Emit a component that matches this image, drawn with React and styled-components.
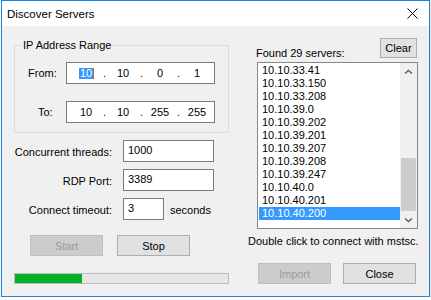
import React from "react";
import styled, { createGlobalStyle, css } from "styled-components";

const GlobalStyle = createGlobalStyle`
  html, body {
    margin: 0;
    padding: 0;
    background: #ffffff;
  }
  body {
    font-family: "Liberation Sans", Arial, sans-serif;
    font-size: 11px;
    color: #000;
  }
`;

const Window = styled.div`
  box-sizing: border-box;
  width: 429px;
  height: 297px;
  margin-left: 1px;
  border: 1px solid #1c84d9;
  background: #f0f0f0;
  display: flex;
  flex-direction: column;
  box-shadow: 1px 2px 3px rgba(0, 0, 0, 0.18);
  white-space: nowrap;
`;

const TitleBar = styled.div`
  height: 25px;
  flex-shrink: 0;
  background: #ffffff;
  display: flex;
  align-items: center;
  justify-content: space-between;
  padding: 0 11px 0 5px;
  font-size: 11.5px;
`;

const Body = styled.div`
  flex: 1;
  display: flex;
  padding-left: 12px;
  gap: 19px;
`;

const LeftCol = styled.div`
  width: 215px;
  display: flex;
  flex-direction: column;
`;

const RightCol = styled.div`
  width: 169px;
  display: flex;
  flex-direction: column;
`;

const GroupBox = styled.div`
  position: relative;
  margin-top: 19px;
  border: 1px solid #dcdcdc;
  padding: 16px 0 9px 0;
  display: flex;
  flex-direction: column;
  gap: 17px;
`;

const Legend = styled.span`
  position: absolute;
  top: -8px;
  left: 6px;
  padding: 0 2px;
  background: #f0f0f0;
  line-height: 14px;
`;

const IpRow = styled.div`
  display: grid;
  grid-template-columns: 51px 149px;
  align-items: center;
  height: 22px;
`;

const IpLabel = styled.span`
  padding-left: ${(p) => p.$indent}px;
`;

const IpBox = styled.div`
  box-sizing: border-box;
  height: 22px;
  border: 1px solid #7a7a7a;
  background: #ffffff;
  display: flex;
  align-items: center;
  padding-left: 6px;
`;

const Octet = styled.span`
  width: 26px;
  text-align: center;
  line-height: 11px;
`;

const Dot = styled.span`
  width: 11px;
  text-align: center;
`;

const Selected = styled.span`
  background: #3399ff;
  color: #ffffff;
  display: inline-block;
  padding: 0 0.5px;
  box-shadow: 1px 0 0 #c56a00;
`;

const Fields = styled.div`
  margin-top: 7px;
  display: flex;
  flex-direction: column;
  gap: 7px;
`;

const FieldRow = styled.div`
  display: flex;
  align-items: center;
  height: 22px;
`;

const FieldLabel = styled.span`
  width: 98px;
  flex-shrink: 0;
  text-align: right;
  margin-right: 11px;
  padding-top: 2px;
`;

const TextBox = styled.div`
  box-sizing: border-box;
  flex-shrink: 0;
  width: ${(p) => p.$width}px;
  height: 22px;
  border: 1px solid #7a7a7a;
  background: #ffffff;
  padding: 3px 4px;
  line-height: 13px;
`;

const Suffix = styled.span`
  margin-left: 6px;
  padding-top: 2px;
`;

const ButtonRow = styled.div`
  display: flex;
  gap: ${(p) => p.$gap}px;
  margin-top: 15px;
  padding-left: ${(p) => p.$indent}px;
`;

const Button = styled.div`
  box-sizing: border-box;
  flex-shrink: 0;
  width: ${(p) => p.$width || 73}px;
  height: ${(p) => p.$height || 21}px;
  border: 1px solid #adadad;
  background: #e1e1e1;
  display: flex;
  align-items: center;
  justify-content: center;
  ${(p) =>
    p.$disabled &&
    css`
      border-color: #bfbfbf;
      background: #cccccc;
      color: #9a9a9a;
    `}
`;

const Progress = styled.div`
  box-sizing: border-box;
  margin-top: 17px;
  height: 11px;
  border: 1px solid #bcbcbc;
  background: #e6e6e6;
`;

const ProgressFill = styled.div`
  height: 100%;
  background: #06b025;
`;

const ListHeader = styled.div`
  margin-top: 12px;
  display: flex;
  align-items: flex-end;
  justify-content: space-between;
  padding-left: 8px;
`;

const HeaderText = styled.span`
  line-height: 13px;
  margin-bottom: -2px;
`;

const ListBox = styled.div`
  box-sizing: border-box;
  flex-shrink: 0;
  margin-top: 4px;
  margin-left: 9px;
  width: 161px;
  height: 167px;
  border: 1px solid #828790;
  background: #ffffff;
  display: flex;
`;

const Items = styled.div`
  flex: 1;
  padding: 1px 0 0 1px;
`;

const Item = styled.div`
  height: 13px;
  line-height: 13px;
  padding-left: 3px;
  ${(p) =>
    p.$selected &&
    css`
      background: #3399ff;
      color: #ffffff;
    `}
`;

const ScrollBar = styled.div`
  width: 17px;
  background: #f0f0f0;
  display: flex;
  flex-direction: column;
`;

const ScrollArrow = styled.div`
  height: 17px;
  display: flex;
  align-items: center;
  justify-content: center;
`;

const Track = styled.div`
  flex: 1;
  display: flex;
  flex-direction: column;
  justify-content: flex-end;
`;

const Thumb = styled.div`
  height: 53px;
  margin: 0 1px;
  background: #cdcdcd;
`;

const Hint = styled.div`
  margin-top: 6px;
  line-height: 13px;
`;

const Chevron = ({ down }) => (
  <svg width="9" height="6" viewBox="0 0 9 6">
    <polyline
      points={down ? "1,1.5 4.5,4.5 8,1.5" : "1,4.5 4.5,1.5 8,4.5"}
      fill="none"
      stroke="#606060"
      strokeWidth="1.6"
    />
  </svg>
);

const servers = [
  "10.10.33.41",
  "10.10.33.150",
  "10.10.33.208",
  "10.10.39.0",
  "10.10.39.202",
  "10.10.39.201",
  "10.10.39.207",
  "10.10.39.208",
  "10.10.39.247",
  "10.10.40.0",
  "10.10.40.201",
  "10.10.40.200",
];

function IpField({ parts, selectFirst }) {
  return (
    <IpBox>
      {parts.map((p, i) => (
        <React.Fragment key={i}>
          {i > 0 && <Dot>.</Dot>}
          <Octet>{i === 0 && selectFirst ? <Selected>{p}</Selected> : p}</Octet>
        </React.Fragment>
      ))}
    </IpBox>
  );
}

export default function App() {
  return (
    <>
      <GlobalStyle />
      <Window>
        <TitleBar>
          <span>Discover Servers</span>
          <svg width="11" height="11" viewBox="0 0 11 11">
            <path d="M0.5 0.5 L10.5 10.5 M10.5 0.5 L0.5 10.5" stroke="#000" strokeWidth="1" />
          </svg>
        </TitleBar>
        <Body>
          <LeftCol>
            <GroupBox>
              <Legend>IP Address Range</Legend>
              <IpRow>
                <IpLabel $indent={13}>From:</IpLabel>
                <IpField parts={["10", "10", "0", "1"]} selectFirst />
              </IpRow>
              <IpRow>
                <IpLabel $indent={23}>To:</IpLabel>
                <IpField parts={["10", "10", "255", "255"]} />
              </IpRow>
            </GroupBox>
            <Fields>
              <FieldRow>
                <FieldLabel>Concurrent threads:</FieldLabel>
                <TextBox $width={91}>1000</TextBox>
              </FieldRow>
              <FieldRow>
                <FieldLabel>RDP Port:</FieldLabel>
                <TextBox $width={91}>3389</TextBox>
              </FieldRow>
              <FieldRow>
                <FieldLabel>Connect timeout:</FieldLabel>
                <TextBox $width={41}>3</TextBox>
                <Suffix>seconds</Suffix>
              </FieldRow>
            </Fields>
            <ButtonRow $gap={14} $indent={16}>
              <Button $disabled>Start</Button>
              <Button>Stop</Button>
            </ButtonRow>
            <Progress>
              <ProgressFill style={{ width: `${(67 / 213) * 100}%` }} />
            </Progress>
          </LeftCol>
          <RightCol>
            <ListHeader>
              <HeaderText>Found 29 servers:</HeaderText>
              <Button $width={37} $height={20}>Clear</Button>
            </ListHeader>
            <ListBox>
              <Items>
                {servers.map((s, i) => (
                  <Item key={s} $selected={i === servers.length - 1}>
                    {s}
                  </Item>
                ))}
              </Items>
              <ScrollBar>
                <ScrollArrow>
                  <Chevron />
                </ScrollArrow>
                <Track>
                  <Thumb />
                </Track>
                <ScrollArrow>
                  <Chevron down />
                </ScrollArrow>
              </ScrollBar>
            </ListBox>
            <Hint>Double click to connect with mstsc.</Hint>
            <ButtonRow $gap={12} $indent={10}>
              <Button $disabled>Import</Button>
              <Button>Close</Button>
            </ButtonRow>
          </RightCol>
        </Body>
      </Window>
    </>
  );
}
